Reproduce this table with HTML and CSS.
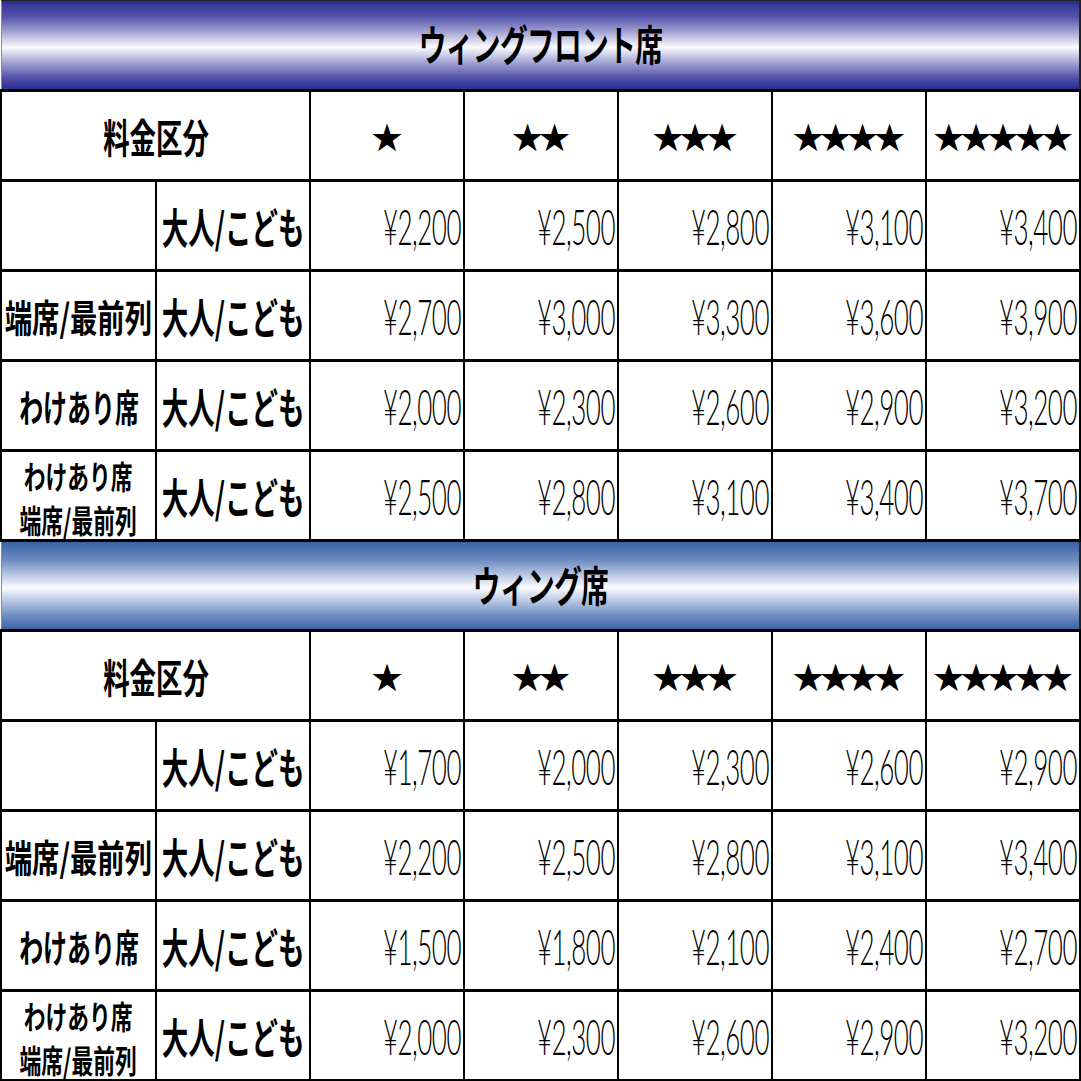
FILE: index.html
```html
<!DOCTYPE html>
<html lang="ja">
<head>
<meta charset="utf-8">
<title>料金表</title>
<link rel="stylesheet" href="styles.css">
</head>
<body>
<table class="price">
  <colgroup>
    <col class="c-a"><col class="c-b"><col class="c-p"><col class="c-p"><col class="c-p"><col class="c-p"><col class="c-p">
  </colgroup>
  <tbody>
    <tr class="band band-front"><th colspan="7"><div class="in"><span class="title">ウィングフロント席</span></div></th></tr>
    <tr><th colspan="2"><div class="in"><span class="kind">料金区分</span></div></th>
      <th><div class="in"><span class="stars">★</span></div></th><th><div class="in"><span class="stars">★★</span></div></th><th><div class="in"><span class="stars">★★★</span></div></th><th><div class="in"><span class="stars">★★★★</span></div></th><th><div class="in"><span class="stars">★★★★★</span></div></th></tr>
    <tr><th></th><th><div class="in"><span class="who">大人/こども</span></div></th>
      <td><span class="yen">¥2,200</span></td><td><span class="yen">¥2,500</span></td><td><span class="yen">¥2,800</span></td><td><span class="yen">¥3,100</span></td><td><span class="yen">¥3,400</span></td></tr>
    <tr><th><div class="in"><span class="seat wide">端席/最前列</span></div></th><th><div class="in"><span class="who">大人/こども</span></div></th>
      <td><span class="yen">¥2,700</span></td><td><span class="yen">¥3,000</span></td><td><span class="yen">¥3,300</span></td><td><span class="yen">¥3,600</span></td><td><span class="yen">¥3,900</span></td></tr>
    <tr><th><div class="in"><span class="seat">わけあり席</span></div></th><th><div class="in"><span class="who">大人/こども</span></div></th>
      <td><span class="yen">¥2,000</span></td><td><span class="yen">¥2,300</span></td><td><span class="yen">¥2,600</span></td><td><span class="yen">¥2,900</span></td><td><span class="yen">¥3,200</span></td></tr>
    <tr><th><div class="in"><span class="seat2">わけあり席<br>端席/最前列</span></div></th><th><div class="in"><span class="who">大人/こども</span></div></th>
      <td><span class="yen">¥2,500</span></td><td><span class="yen">¥2,800</span></td><td><span class="yen">¥3,100</span></td><td><span class="yen">¥3,400</span></td><td><span class="yen">¥3,700</span></td></tr>

    <tr class="band band-wing"><th colspan="7"><div class="in"><span class="title">ウィング席</span></div></th></tr>
    <tr><th colspan="2"><div class="in"><span class="kind">料金区分</span></div></th>
      <th><div class="in"><span class="stars">★</span></div></th><th><div class="in"><span class="stars">★★</span></div></th><th><div class="in"><span class="stars">★★★</span></div></th><th><div class="in"><span class="stars">★★★★</span></div></th><th><div class="in"><span class="stars">★★★★★</span></div></th></tr>
    <tr><th></th><th><div class="in"><span class="who">大人/こども</span></div></th>
      <td><span class="yen">¥1,700</span></td><td><span class="yen">¥2,000</span></td><td><span class="yen">¥2,300</span></td><td><span class="yen">¥2,600</span></td><td><span class="yen">¥2,900</span></td></tr>
    <tr><th><div class="in"><span class="seat wide">端席/最前列</span></div></th><th><div class="in"><span class="who">大人/こども</span></div></th>
      <td><span class="yen">¥2,200</span></td><td><span class="yen">¥2,500</span></td><td><span class="yen">¥2,800</span></td><td><span class="yen">¥3,100</span></td><td><span class="yen">¥3,400</span></td></tr>
    <tr><th><div class="in"><span class="seat">わけあり席</span></div></th><th><div class="in"><span class="who">大人/こども</span></div></th>
      <td><span class="yen">¥1,500</span></td><td><span class="yen">¥1,800</span></td><td><span class="yen">¥2,100</span></td><td><span class="yen">¥2,400</span></td><td><span class="yen">¥2,700</span></td></tr>
    <tr><th><div class="in"><span class="seat2">わけあり席<br>端席/最前列</span></div></th><th><div class="in"><span class="who">大人/こども</span></div></th>
      <td><span class="yen">¥2,000</span></td><td><span class="yen">¥2,300</span></td><td><span class="yen">¥2,600</span></td><td><span class="yen">¥2,900</span></td><td><span class="yen">¥3,200</span></td></tr>
  </tbody>
</table>
</body>
</html>
```
FILE: styles.css
```css
html, body {
  margin: 0;
  padding: 0;
  background: #ffffff;
}

.price {
  width: 1080px;
  table-layout: fixed;
  border-collapse: collapse;
  font-family: "Noto Sans CJK JP", "Noto Sans", sans-serif;
  color: #000;
  border-left: 1px solid #8a8a8a;
}

.c-a { width: 155px; }
.c-b { width: 154px; }
.c-p { width: 154px; }

.price tr { height: 90px; }

.price th,
.price td {
  border-top: 3px solid #000;
  border-bottom: 3px solid #000;
  border-left: 2px solid #000;
  border-right: 2px solid #000;
  padding: 0;
  height: 87px;
  white-space: nowrap;
  line-height: 1;
}

.price th {
  font-weight: 700;
  text-align: center;
}

.price td {
  text-align: right;
  padding-right: 3px;
}

.in {
  display: flex;
  justify-content: center;
  align-items: center;
  height: 86px;
  overflow: visible;
}

.band th {
  border-left: 1px solid #8a8a8a;
  border-right: 2px solid #222;
  border-top: 1px solid #222;
}

.band-front th {
  background: linear-gradient(to bottom,
    #2e2e92 0%, #5656ad 18%, #b4b4dc 38%, #fbfbfe 52%, #b4b4dc 66%, #5454ab 86%, #2a2a8e 100%);
}

.band-wing th {
  border-top: 3px solid #000;
  background: linear-gradient(to bottom,
    #3a62a6 0%, #6c8cc0 20%, #c4d1e8 40%, #fafbfe 52%, #c4d1e8 64%, #6f8ec2 84%, #3a62a6 100%);
}

.title,
.kind,
.who,
.seat,
.seat2 {
  display: inline-block;
  flex: none;
}

.title {
  font-size: 42px;
  transform: scaleX(0.66);
  letter-spacing: -1px;
  margin-top: -4px;
}

.kind {
  font-size: 40px;
  transform: scaleX(0.66);
}

.who {
  font-size: 42px;
  transform: scaleX(0.63);
}

.seat {
  font-size: 38px;
  transform: scaleX(0.63);
}

.seat.wide {
  transform: scaleX(0.72);
}

.seat2 {
  font-size: 32px;
  line-height: 44px;
  transform: scaleX(0.68);
  padding-top: 2px;
}

.stars {
  display: inline-block;
  flex: none;
  font-family: "DejaVu Sans", sans-serif;
  font-size: 38px;
  font-weight: 400;
  letter-spacing: -7px;
  padding-right: 7px;
  padding-top: 4px;
}

.yen {
  display: inline-block;
  font-family: "Lato", "Liberation Sans", sans-serif;
  font-weight: 300;
  font-size: 50px;
  transform: scaleX(0.52);
  transform-origin: right center;
  letter-spacing: -1px;
}
```
